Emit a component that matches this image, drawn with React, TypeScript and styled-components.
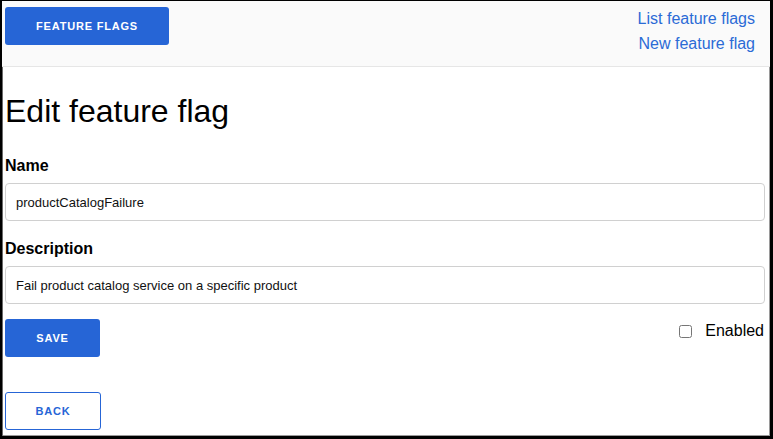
import React from "react";
import styled, { createGlobalStyle } from "styled-components";

const GlobalStyle = createGlobalStyle`
  html, body {
    margin: 0;
    padding: 0;
    background: #ffffff;
  }
  body {
    font-family: "Liberation Sans", Arial, Helvetica, sans-serif;
    color: #000000;
  }
  * {
    box-sizing: border-box;
  }
`;

const App: React.FC = () => {
    return (
        <>
            <GlobalStyle />
            <Frame>
                <Header>
                    <PrimaryButton type="button">Feature Flags</PrimaryButton>
                    <Nav>
                        <NavLink href="#">List feature flags</NavLink>
                        <NavLink href="#">New feature flag</NavLink>
                    </Nav>
                </Header>
                <Main>
                    <Title>Edit feature flag</Title>
                    <Field>
                        <Label>Name</Label>
                        <Input defaultValue="productCatalogFailure" />
                    </Field>
                    <Field $gap={19}>
                        <Label>Description</Label>
                        <Input defaultValue="Fail product catalog service on a specific product" />
                    </Field>
                    <ActionRow>
                        <PrimaryButton type="button" $compact>Save</PrimaryButton>
                        <CheckLabel>
                            <Checkbox type="checkbox" />
                            <span>Enabled</span>
                        </CheckLabel>
                    </ActionRow>
                    <OutlineButton type="button">Back</OutlineButton>
                </Main>
            </Frame>
        </>
    );
}

export default App;

const Frame = styled.div`
  height: 439px;
  border-style: solid;
  border-color: #000000;
  border-width: 1px 3px 3px 2px;
  box-shadow: inset 1px 1px 0 #6b6b6b, inset -1px -1px 0 #9a9a9a;
  overflow: hidden;
  display: flex;
  flex-direction: column;
`;

const Header = styled.header`
  height: 66px;
  display: flex;
  justify-content: space-between;
  align-items: flex-start;
  padding: 6px 15px 0 3px;
  background: #fafafa;
  border-bottom: 1px solid #e6e6e6;
`;

const Nav = styled.nav`
  display: flex;
  flex-direction: column;
  align-items: flex-end;
  margin-top: -1px;
`;

const NavLink = styled.a`
  font-size: 16px;
  line-height: 25px;
  color: #2b6bd6;
  text-decoration: none;
`;

const PrimaryButton = styled.button<{ $compact?: boolean }>`
  height: 38px;
  padding: 0 31px;
  min-width: ${(p) => (p.$compact ? "95px" : "164px")};
  background: #2665d6;
  color: #ffffff;
  border: none;
  border-radius: 3px;
  font-family: "Liberation Sans", Arial, sans-serif;
  font-size: 11px;
  font-weight: 700;
  letter-spacing: 0.8px;
  text-transform: uppercase;
  cursor: pointer;
`;

const OutlineButton = styled.button`
  width: 96px;
  height: 38px;
  margin-top: 35px;
  background: #ffffff;
  color: #2665d6;
  border: 1px solid #2665d6;
  border-radius: 3px;
  font-family: "Liberation Sans", Arial, sans-serif;
  font-size: 11px;
  font-weight: 700;
  letter-spacing: 0.8px;
  text-transform: uppercase;
  cursor: pointer;
`;

const Main = styled.main`
  display: flex;
  flex-direction: column;
  align-items: flex-start;
  padding: 0 5px 0 3px;
`;

const Title = styled.h1`
  margin: 26px 0 0;
  font-size: 32px;
  line-height: 37px;
  font-weight: 400;
`;

const Field = styled.div<{ $gap?: number }>`
  width: 100%;
  display: flex;
  flex-direction: column;
  gap: 8px;
  margin-top: ${(p) => p.$gap ?? 27}px;
`;

const Label = styled.label`
  font-size: 16px;
  line-height: 18px;
  font-weight: 700;
`;

const Input = styled.input`
  width: 100%;
  height: 38px;
  padding: 0 10px;
  border: 1px solid #d0d0d0;
  border-radius: 4px;
  font-family: "Liberation Sans", Arial, sans-serif;
  font-size: 13px;
  color: #111111;
  background: #ffffff;
`;

const ActionRow = styled.div`
  width: 100%;
  display: flex;
  justify-content: space-between;
  align-items: flex-start;
  margin-top: 15px;
`;

const CheckLabel = styled.label`
  display: flex;
  align-items: center;
  gap: 13px;
  margin-top: 3px;
  padding-right: 1px;
  font-size: 16px;
  line-height: 18px;
`;

const Checkbox = styled.input`
  width: 13px;
  height: 13px;
  margin: 0;
`;
